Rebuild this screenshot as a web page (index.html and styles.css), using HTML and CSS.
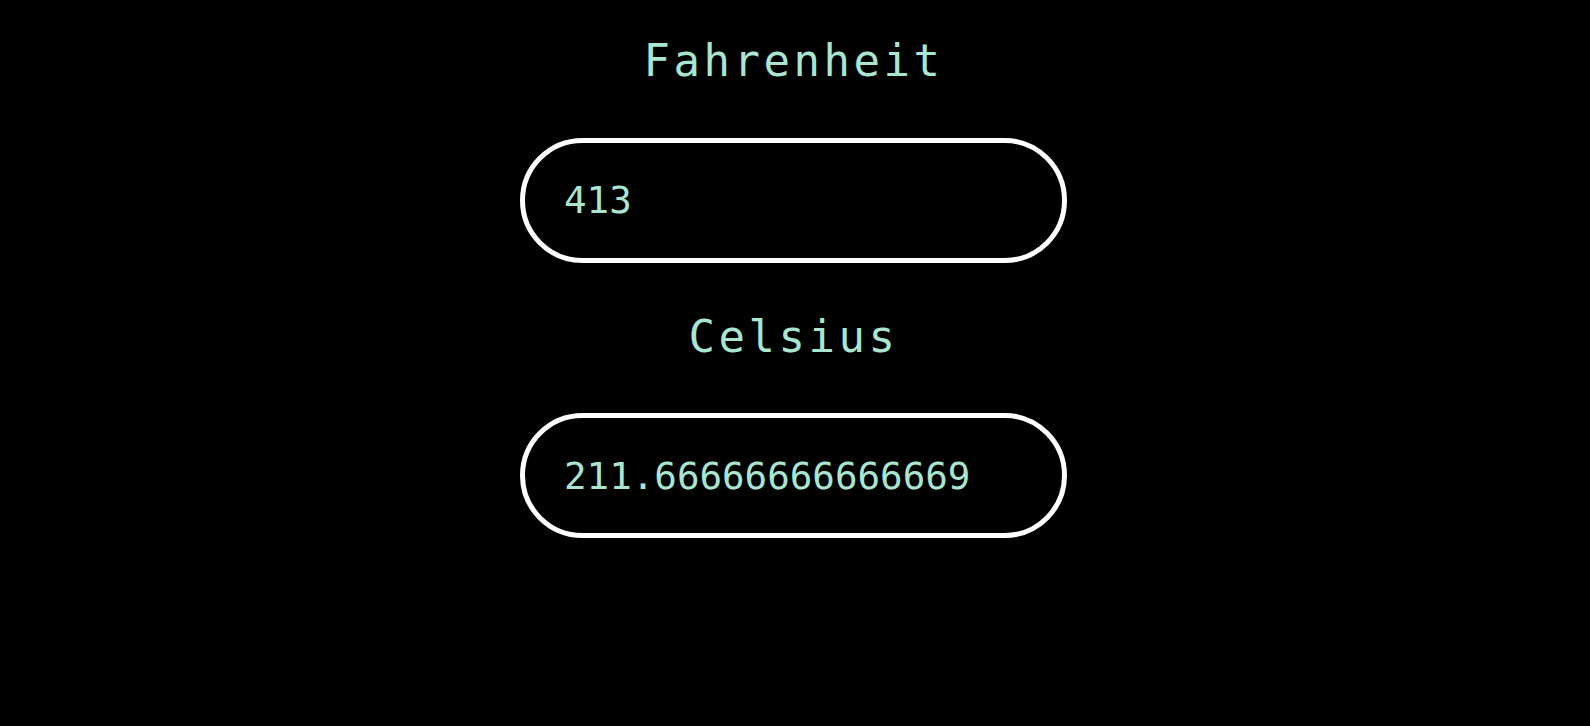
FILE: index.html
```html
<!DOCTYPE html>
<html lang="en">
<head>
<meta charset="utf-8">
<title>Temperature Converter</title>
<link rel="stylesheet" href="styles.css">
</head>
<body>
<main class="converter">
  <label class="label" for="fahrenheit">Fahrenheit</label>
  <input class="field" id="fahrenheit" type="text" value="413">
  <label class="label" for="celsius">Celsius</label>
  <input class="field" id="celsius" type="text" value="211.66666666666669">
</main>
</body>
</html>
```
FILE: styles.css
```css
html, body {
  margin: 0;
  padding: 0;
  background: #000;
  height: 100%;
}

.converter {
  display: flex;
  flex-direction: column;
  align-items: center;
  padding-top: 35px;
  padding-right: 3px;
  font-family: "DejaVu Sans Mono", "Liberation Mono", monospace;
}

.label {
  color: #a8e6cf;
  font-size: 44px;
  letter-spacing: 3.5px;
  line-height: normal;
  margin-bottom: 51.5px;
}

.field + .label {
  margin-top: 48px;
}

.field {
  box-sizing: border-box;
  width: 547px;
  height: 125px;
  border: 5px solid #fff;
  border-radius: 63px;
  background: #000;
  color: #a8e6cf;
  font-family: "DejaVu Sans Mono", "Liberation Mono", monospace;
  font-size: 37.5px;
  padding: 0 20px 0 39px;
  outline: none;
  margin: 0;
}
```
